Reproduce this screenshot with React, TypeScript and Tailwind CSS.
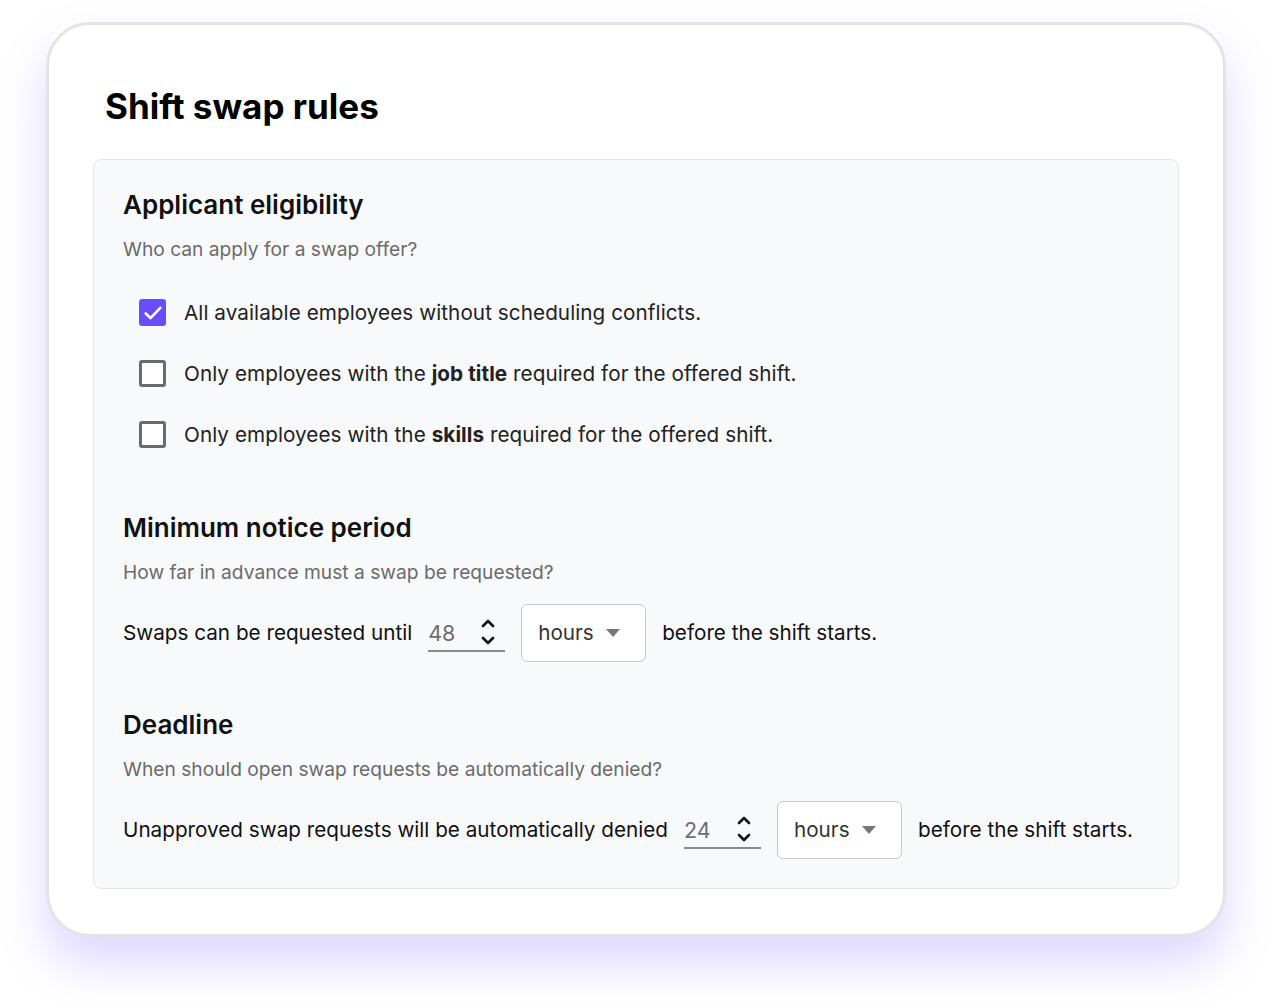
import { useState } from "react";

type Option = {
  id: string;
  label: React.ReactNode;
};

const ELIGIBILITY: Option[] = [
  { id: "all", label: "All available employees without scheduling conflicts." },
  {
    id: "title",
    label: (
      <>
        Only employees with the <b className="font-bold">job title</b> required
        for the offered shift.
      </>
    ),
  },
  {
    id: "skills",
    label: (
      <>
        Only employees with the <b className="font-bold">skills</b> required
        for the offered shift.
      </>
    ),
  },
];

function Checkbox({ checked, onChange }: { checked: boolean; onChange: () => void }) {
  return (
    <button
      type="button"
      role="checkbox"
      aria-checked={checked}
      onClick={onChange}
      className={
        checked
          ? "flex h-[27px] w-[27px] shrink-0 items-center justify-center rounded-[3px] bg-[#6a4cff]"
          : "flex h-[27px] w-[27px] shrink-0 items-center justify-center rounded-[3px] border-[3px] border-[#6b6b6b] bg-white"
      }
    >
      {checked && (
        <svg viewBox="0 0 24 24" className="h-[22px] w-[22px]" fill="none">
          <path
            d="M4 12.5l5.2 5L20 6.5"
            stroke="white"
            strokeWidth="2.8"
            strokeLinecap="round"
            strokeLinejoin="round"
          />
        </svg>
      )}
    </button>
  );
}

function NumberField({ value }: { value: number }) {
  return (
    <span className="flex h-[38px] w-[77px] items-center justify-between border-b-2 border-[#8a8a8a]">
      <span className="pt-[2px] text-[21.5px] text-[#6e6e6e]">{value}</span>
      <svg viewBox="0 0 16 30" className="mr-[9px] h-[30px] w-[16px]" fill="none">
        <path d="M3 9l5-5 5 5" stroke="#111" strokeWidth="2.6" strokeLinecap="round" strokeLinejoin="round" />
        <path d="M3 21l5 5 5-5" stroke="#111" strokeWidth="2.6" strokeLinecap="round" strokeLinejoin="round" />
      </svg>
    </span>
  );
}

function UnitSelect() {
  return (
    <span className="flex h-[58px] w-[125px] items-center gap-[12px] rounded-[6px] border border-[#c9c9cc] bg-white pl-[16px]">
      <span className="text-[20.7px] text-[#333]">hours</span>
      <svg viewBox="0 0 14 8" className="h-[8px] w-[14px]">
        <path d="M0 0h14L7 8z" fill="#777" />
      </svg>
    </span>
  );
}

function Section({
  title,
  hint,
  children,
}: {
  title: string;
  hint: string;
  children: React.ReactNode;
}) {
  return (
    <section>
      <h2 className="text-[26px] font-semibold leading-[32px] text-[#111]">{title}</h2>
      <p className="mt-[16px] text-[19.2px] leading-[24px] text-[#6b6b6b]">{hint}</p>
      {children}
    </section>
  );
}

export default function App() {
  const [selected, setSelected] = useState<string[]>(["all"]);

  const toggle = (id: string) =>
    setSelected((prev) => (prev.includes(id) ? prev.filter((x) => x !== id) : [...prev, id]));

  return (
    <div className="min-h-[1004px] bg-white px-[46px] pt-[22px] font-['Inter','Liberation_Sans',sans-serif]">
      <div className="h-[915px] rounded-[44px] border-[3px] border-[#e4e4e6] bg-white px-[44px] pt-[59px] shadow-[0_26px_48px_rgba(124,98,255,0.26)]">
        <h1 className="pl-[12px] text-[35px] font-bold leading-[44px] text-black">Shift swap rules</h1>

        <div className="mt-[31px] flex flex-col gap-[47px] rounded-[8px] border border-[#e6e6ea] bg-[#f8f9fb] px-[29px] pb-[29px] pt-[29px]">
          <Section title="Applicant eligibility" hint="Who can apply for a swap offer?">
            <ul className="mt-[21px] flex flex-col pl-[16px]">
              {ELIGIBILITY.map((opt) => (
                <li key={opt.id} className="flex h-[61px] items-center gap-[18px]">
                  <Checkbox checked={selected.includes(opt.id)} onChange={() => toggle(opt.id)} />
                  <span className="text-[20.7px] leading-[26px] tracking-[0.003em] text-[#222]">{opt.label}</span>
                </li>
              ))}
            </ul>
          </Section>

          <Section title="Minimum notice period" hint="How far in advance must a swap be requested?">
            <div className="mt-[20px] flex items-center gap-[16px] text-[20.7px] text-[#111]">
              <span>Swaps can be requested until</span>
              <NumberField value={48} />
              <UnitSelect />
              <span>before the shift starts.</span>
            </div>
          </Section>

          <Section title="Deadline" hint="When should open swap requests be automatically denied?">
            <div className="mt-[20px] flex items-center gap-[16px] text-[20.7px] text-[#111]">
              <span>Unapproved swap requests will be automatically denied</span>
              <NumberField value={24} />
              <UnitSelect />
              <span>before the shift starts.</span>
            </div>
          </Section>
        </div>
      </div>
    </div>
  );
}
